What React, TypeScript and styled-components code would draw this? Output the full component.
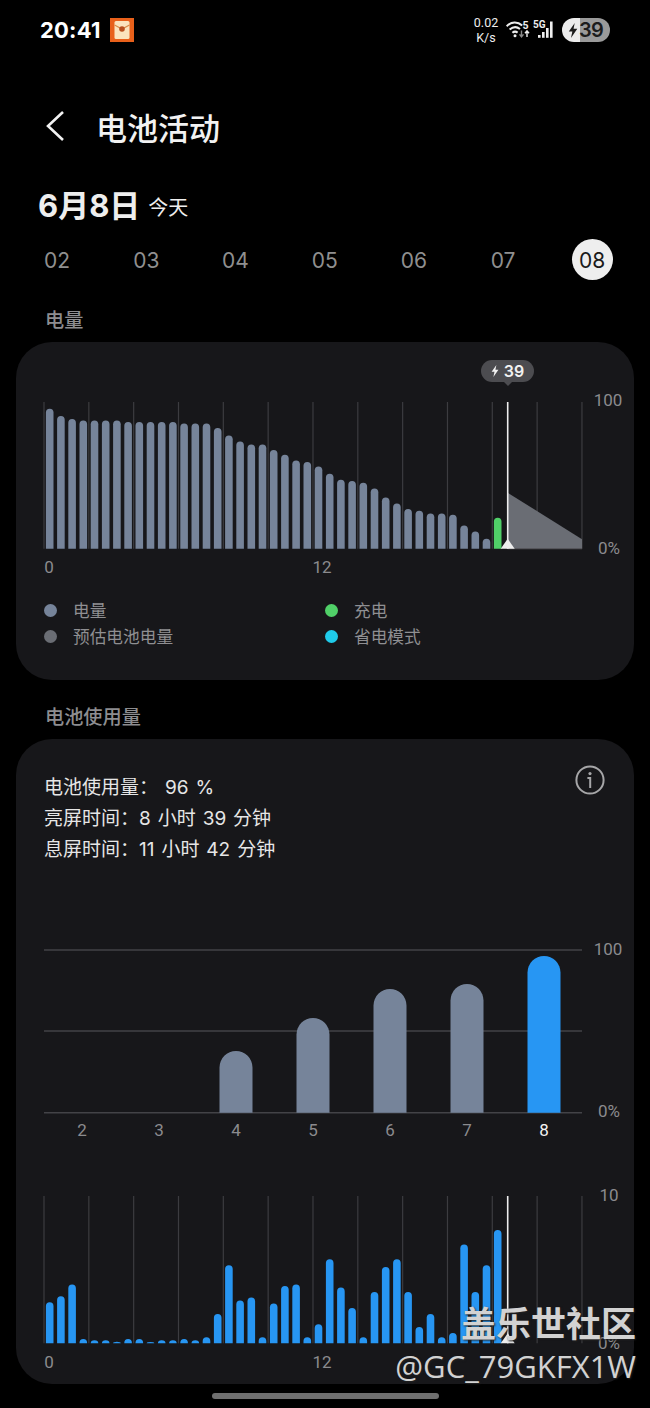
import styled, { createGlobalStyle } from "styled-components";

const FONT = `Inter, "Noto Sans CJK SC", sans-serif`;
const LABEL_FONT = `Roboto, "Noto Sans CJK SC", sans-serif`;

const GRID = "#3c3c40";
const SLATE = "#76849a";
const BLUE = "#2796f3";
const GREEN = "#50d068";

// chart x coordinates are relative to the card's left edge
const PLOT_LEFT = 28;
const HOUR = 44.83;
const SLOT = 11.2;
const FIRST_BAR = 33.7;

const levelHeights = [
  140, 132.7, 129.7, 128.3, 128.3, 128.3, 128.3, 126.7, 126.7, 126.7, 126.7,
  126.7, 125.3, 125.3, 125.3, 120.7, 113.3, 107.3, 104.3, 104.3, 98.7, 94, 88.3,
  86.7, 82.3, 75, 69, 67.7, 66, 60.3, 51.3, 45.3, 39.7, 38, 35.3, 35.3, 34, 23.3,
  17.3, 10,
];

const usageHeights = [
  41, 47, 58.7, 4.3, 3, 3, 1.5, 4.3, 4.3, 1.2, 3, 3, 4.3, 3, 6, 29.3, 78, 42.7,
  45.7, 6, 39.7, 57.3, 58.7, 6, 19, 84, 55.7, 35.3, 6, 51.3, 76.3, 84, 51.3, 16.3,
  29.3, 6, 10.3, 98.7, 51.3, 78, 113.3,
];

const dailyBars = [
  { day: 2, top: 0 },
  { day: 3, top: 0 },
  { day: 4, top: 61.7 },
  { day: 5, top: 94.7 },
  { day: 6, top: 123.7 },
  { day: 7, top: 128.7 },
  { day: 8, top: 156.7 },
];

const dates = ["02", "03", "04", "05", "06", "07", "08"];

const legend = [
  { label: "电量", color: SLATE },
  { label: "充电", color: GREEN },
  { label: "预估电池电量", color: "#6a6d74" },
  { label: "省电模式", color: "#1fcbea" },
];

const barPath = (cx: number, width: number, height: number, base: number) => {
  const r = Math.min(width / 2, height);
  const left = cx - width / 2;
  const right = cx + width / 2;
  const top = base - height;
  return `M${left} ${base}V${top + r}A${width / 2} ${r} 0 0 1 ${right} ${top + r}V${base}Z`;
};

const GlobalStyle = createGlobalStyle`
  html, body {
    margin: 0;
    background: #000;
    overflow: hidden;
  }
`;

const Phone = styled.div`
  position: relative;
  width: 650px;
  height: 1408px;
  overflow: hidden;
  background: #000;
  font-family: ${FONT};
  color: #fff;
`;

const StatusBar = styled.div`
  display: flex;
  align-items: center;
  height: 60px;
  padding: 0 40px;
  box-sizing: border-box;
`;

const Clock = styled.span`
  font-size: 22px;
  font-weight: 700;
  letter-spacing: 0.2px;
`;

const AppBadge = styled.svg`
  display: block;
  margin-left: 9px;
`;

const StatusRight = styled.div`
  display: flex;
  align-items: center;
  margin-left: auto;
`;

const NetSpeed = styled.div`
  width: 34px;
  margin-right: 3px;
  font-family: ${LABEL_FONT};
  font-size: 12.5px;
  line-height: 15px;
  text-align: center;
  color: #eee;
`;

const BatteryPill = styled.div`
  display: flex;
  align-items: center;
  width: 48px;
  height: 24px;
  margin-left: 6px;
  padding-left: 6px;
  box-sizing: border-box;
  border-radius: 12px;
  background: linear-gradient(90deg, #ececec 37%, #9a9a9a 37%);
  color: #1c1c1c;
  font-size: 20px;
  font-weight: 600;
`;

const BatteryValue = styled.span`
  margin-left: 1px;
  letter-spacing: -0.5px;
`;

const Header = styled.div`
  display: flex;
  align-items: center;
  height: 60px;
  margin-top: 36px;
  padding-left: 46px;
`;

const PageTitle = styled.h1`
  margin: 0 0 0 32px;
  font-size: 31px;
  font-weight: 500;
  color: #f2f2f2;
`;

const DateHeading = styled.div`
  display: flex;
  height: 40px;
  margin-top: 30px;
  padding-left: 38px;
  font-size: 31px;
  line-height: 40px;
  font-weight: 700;
  color: #eee;
`;

const DateSub = styled.span`
  margin-left: 8px;
  font-size: 20px;
  line-height: 44px;
  font-weight: 400;
`;

const DateStrip = styled.div`
  display: grid;
  grid-template-columns: repeat(7, 89.2px);
  height: 41px;
  margin-top: 13px;
  padding-left: 12.5px;
`;

const DateCell = styled.div<{ $active: boolean }>`
  justify-self: center;
  display: flex;
  align-items: center;
  justify-content: center;
  width: 41px;
  height: 41px;
  padding-top: 1px;
  box-sizing: border-box;
  border-radius: 50%;
  font-size: 21px;
  color: ${({ $active }) => ($active ? "#1a1a1a" : "#8f8f8f")};
  background: ${({ $active }) => ($active ? "#eeeeee" : "transparent")};
`;

const SectionLabel = styled.div<{ $gap: number }>`
  height: 24px;
  margin-top: ${({ $gap }) => $gap}px;
  padding-left: 45px;
  font-size: 19.2px;
  line-height: 24px;
  font-weight: 500;
  color: #8d8d90;
`;

const Card = styled.section<{ $height: number }>`
  height: ${({ $height }) => $height}px;
  margin: 10px 16px 0;
  box-sizing: border-box;
  border-radius: 36px;
  background: #17171a;
`;

const ChartBox = styled.div`
  position: relative;
  padding-top: 14px;
`;

const ChartSvg = styled.svg<{ $gap?: number }>`
  display: block;
  margin-top: ${({ $gap }) => $gap ?? 0}px;
`;

const AxisText = styled.text<{ $bright?: boolean }>`
  font-family: ${LABEL_FONT};
  font-size: 17px;
  fill: ${({ $bright }) => ($bright ? "#f2f2f2" : "#8b8b8e")};
`;

const Tooltip = styled.div`
  position: absolute;
  top: 18px;
  left: 465px;
  display: flex;
  align-items: center;
  justify-content: center;
  gap: 5px;
  width: 53px;
  height: 22px;
  border-radius: 11px;
  background: #4c4c50;
  color: #f2f2f2;
  font-size: 16px;
  font-weight: 600;

  &::after {
    content: "";
    position: absolute;
    left: 22px;
    bottom: -4px;
    border-left: 5px solid transparent;
    border-right: 5px solid transparent;
    border-top: 5px solid #4c4c50;
  }
`;

const Legend = styled.div`
  display: grid;
  grid-template-columns: 281px 1fr;
  grid-auto-rows: 26px;
  margin-top: 17px;
  padding-left: 28px;
`;

const LegendItem = styled.div`
  display: flex;
  align-items: center;
  gap: 16px;
  font-size: 16.7px;
  color: #8f8f92;
`;

const LegendDot = styled.span<{ $color: string }>`
  width: 13px;
  height: 13px;
  border-radius: 50%;
  background: ${({ $color }) => $color};
`;

const SummaryRow = styled.div`
  display: flex;
  justify-content: space-between;
  align-items: flex-start;
  padding: 0 29px;
`;

const SummaryText = styled.div`
  margin-top: 33px;
  margin-left: -1px;
  font-size: 19px;
  line-height: 31px;
  word-spacing: 1.6px;
  color: #e6e6e6;
`;

const InfoIcon = styled.svg`
  display: block;
  margin-top: 26px;
`;

const HomeBar = styled.div`
  width: 227px;
  height: 6px;
  margin: 9px auto 0;
  border-radius: 3px;
  background: #6f6f6f;
`;

const Watermark = styled.div`
  position: absolute;
  right: 14px;
  bottom: 24px;
  text-align: right;
  color: #d2d2d2;
  text-shadow: 1px 1px 2px #222;
`;

const WatermarkName = styled.div`
  margin-bottom: 3px;
  font-size: 35px;
  line-height: 42px;
  font-weight: 700;
`;

const WatermarkUser = styled.div`
  font-family: "Open Sans", sans-serif;
  font-size: 31px;
  line-height: 36px;
`;

const WifiIcon = () => (
  <svg width="26" height="20" viewBox="0 0 26 20" fill="none">
    <path d="M0.6 6.2C5.4 1.4 11.6 1.4 16.2 5.4" stroke="#eee" strokeWidth="2" />
    <path d="M3.6 9.6C7 6.6 11 6.6 14 9" stroke="#eee" strokeWidth="2" />
    <path d="M6.4 12.8C8 11.4 10 11.4 11.6 12.6" stroke="#eee" strokeWidth="2" />
    <circle cx="9" cy="15.8" r="1.5" fill="#eee" />
    <text x="16.5" y="8.5" fontFamily="Roboto, sans-serif" fontSize="10.5" fontWeight="700" fill="#eee">
      5
    </text>
    <path d="M15.5 10.5v6M13.5 14.4l2 2.4 2-2.4" stroke="#888" strokeWidth="1.4" />
    <path d="M21 17v-6M19 13.2l2-2.4 2 2.4" stroke="#eee" strokeWidth="1.4" />
  </svg>
);

const SignalIcon = () => (
  <svg width="24" height="20" viewBox="0 0 24 20">
    <text x="1" y="8" fontFamily="Roboto, sans-serif" fontSize="10" fontWeight="700" fill="#eee">
      5G
    </text>
    <rect x="6" y="15" width="2.6" height="2.8" fill="#eee" />
    <rect x="10" y="12" width="2.6" height="5.8" fill="#eee" />
    <rect x="14" y="8" width="2.6" height="9.8" fill="#eee" />
    <rect x="18" y="1.5" width="2.6" height="16.3" fill="#eee" />
  </svg>
);

const Bolt = ({ size, color }: { size: number; color: string }) => (
  <svg width={size * 0.66} height={size} viewBox="0 0 10 15">
    <path d="M6.8 0 0.8 8.4H4.4L3 15 9.4 5.8H5.6Z" fill={color} />
  </svg>
);

const HourGrid = ({ top, base }: { top: number; base: number }) => (
  <>
    {Array.from({ length: 13 }, (_, i) => (
      <line
        key={i}
        x1={PLOT_LEFT + i * HOUR}
        x2={PLOT_LEFT + i * HOUR}
        y1={top}
        y2={base}
        stroke={GRID}
        strokeWidth="1.2"
      />
    ))}
  </>
);

const LevelChart = () => {
  const top = 46;
  const base = 192.7;
  const cursor = 491.7;
  return (
    <ChartSvg width="618" height="224" viewBox="0 0 618 224">
      <HourGrid top={top} base={base} />
      {levelHeights.map((h, i) => (
        <path key={i} d={barPath(FIRST_BAR + i * SLOT, 7.6, h, base)} fill={SLATE} />
      ))}
      <path d={barPath(FIRST_BAR + 40 * SLOT, 7.6, 31, base)} fill={GREEN} />
      <path
        d={`M${cursor} ${base - 56}L566 ${base - 9.5}V${base}H${cursor}Z`}
        fill="#6a6d74"
      />
      <line x1={cursor} x2="566" y1={base} y2={base} stroke="#55555a" strokeWidth="1.2" />
      <line x1={cursor} x2={cursor} y1={top} y2={base} stroke="#eeeeee" strokeWidth="1.6" />
      <path d={`M${cursor - 7} ${base}L${cursor} ${base - 10}L${cursor + 7} ${base}Z`} fill="#eeeeee" />
      <AxisText x="592" y="50" textAnchor="middle">100</AxisText>
      <AxisText x="593" y="198" textAnchor="middle">0%</AxisText>
      <AxisText x="33" y="217" textAnchor="middle">0</AxisText>
      <AxisText x="306" y="217" textAnchor="middle">12</AxisText>
    </ChartSvg>
  );
};

const DailyChart = () => {
  const base = 177.7;
  const lines = [15, 96, base];
  return (
    <ChartSvg $gap={70} width="618" height="210" viewBox="0 0 618 210">
      {lines.map((y) => (
        <line key={y} x1={PLOT_LEFT} x2="566" y1={y} y2={y} stroke="#434347" strokeWidth="1.4" />
      ))}
      {dailyBars.map(({ day, top }, i) => {
        const cx = 66 + i * 77;
        const isToday = day === 8;
        return (
          <g key={day}>
            {top > 0 && <path d={barPath(cx, 33, top, base)} fill={isToday ? BLUE : SLATE} />}
            <AxisText x={cx} y="201" textAnchor="middle" $bright={isToday}>
              {day}
            </AxisText>
          </g>
        );
      })}
      <AxisText x="592" y="20" textAnchor="middle">100</AxisText>
      <AxisText x="593" y="182" textAnchor="middle">0%</AxisText>
    </ChartSvg>
  );
};

const UsageChart = () => {
  const top = 16;
  const base = 163.3;
  const cursor = 491.7;
  return (
    <ChartSvg $gap={35} width="618" height="195" viewBox="0 0 618 195">
      <HourGrid top={top} base={base} />
      {usageHeights.map((h, i) => (
        <path key={i} d={barPath(FIRST_BAR + i * SLOT, 7.6, h, base)} fill={BLUE} />
      ))}
      <line x1={cursor} x2={cursor} y1={top} y2={base} stroke="#eeeeee" strokeWidth="1.6" />
      <path d={`M${cursor - 7} ${base}L${cursor} ${base - 10}L${cursor + 7} ${base}Z`} fill="#eeeeee" />
      <AxisText x="593" y="21" textAnchor="middle">10</AxisText>
      <AxisText x="593" y="169" textAnchor="middle">0%</AxisText>
      <AxisText x="33" y="188" textAnchor="middle">0</AxisText>
      <AxisText x="306" y="188" textAnchor="middle">12</AxisText>
    </ChartSvg>
  );
};

const App = () => (
  <Phone>
    <GlobalStyle />
    <StatusBar>
      <Clock>20:41</Clock>
      <AppBadge width="24" height="24" viewBox="0 0 24 24">
        <rect width="24" height="24" fill="#e8601a" />
        <rect x="4.5" y="3" width="15" height="18" rx="1.5" fill="#fbe3bd" />
        <path d="M4.5 7l7.5 4 7.5-4" fill="none" stroke="#d98a45" strokeWidth="1.2" />
        <circle cx="12" cy="11" r="2.8" fill="#b9501f" />
      </AppBadge>
      <StatusRight>
        <NetSpeed>
          0.02
          <br />
          K/s
        </NetSpeed>
        <WifiIcon />
        <SignalIcon />
        <BatteryPill>
          <Bolt size={15} color="#1c1c1c" />
          <BatteryValue>39</BatteryValue>
        </BatteryPill>
      </StatusRight>
    </StatusBar>

    <Header>
      <svg width="18" height="30" viewBox="0 0 18 30" fill="none">
        <path d="M17 1 2 15l15 14" stroke="#f2f2f2" strokeWidth="2.6" />
      </svg>
      <PageTitle>电池活动</PageTitle>
    </Header>

    <DateHeading>
      6月8日
      <DateSub>今天</DateSub>
    </DateHeading>

    <DateStrip>
      {dates.map((d) => (
        <DateCell key={d} $active={d === "08"}>
          {d}
        </DateCell>
      ))}
    </DateStrip>

    <SectionLabel $gap={28}>电量</SectionLabel>
    <Card $height={338}>
      <ChartBox>
        <LevelChart />
        <Tooltip>
          <Bolt size={12} color="#f2f2f2" />
          39
        </Tooltip>
      </ChartBox>
      <Legend>
        {legend.map((item) => (
          <LegendItem key={item.label}>
            <LegendDot $color={item.color} />
            {item.label}
          </LegendItem>
        ))}
      </Legend>
    </Card>

    <SectionLabel $gap={25}>电池使用量</SectionLabel>
    <Card $height={645}>
      <SummaryRow>
        <SummaryText>
          电池使用量： 96 %
          <br />
          亮屏时间：8 小时 39 分钟
          <br />
          息屏时间：11 小时 42 分钟
        </SummaryText>
        <InfoIcon width="30" height="30" viewBox="0 0 30 30" fill="none">
          <circle cx="15" cy="15" r="13.6" stroke="#a6a6a8" strokeWidth="2" />
          <circle cx="15" cy="8.6" r="1.6" fill="#a6a6a8" />
          <path d="M12.4 13h2.8v10" stroke="#a6a6a8" strokeWidth="2" />
        </InfoIcon>
      </SummaryRow>
      <DailyChart />
      <UsageChart />
    </Card>

    <HomeBar />

    <Watermark>
      <WatermarkName>盖乐世社区</WatermarkName>
      <WatermarkUser>@GC_79GKFX1W</WatermarkUser>
    </Watermark>
  </Phone>
);

export default App;
